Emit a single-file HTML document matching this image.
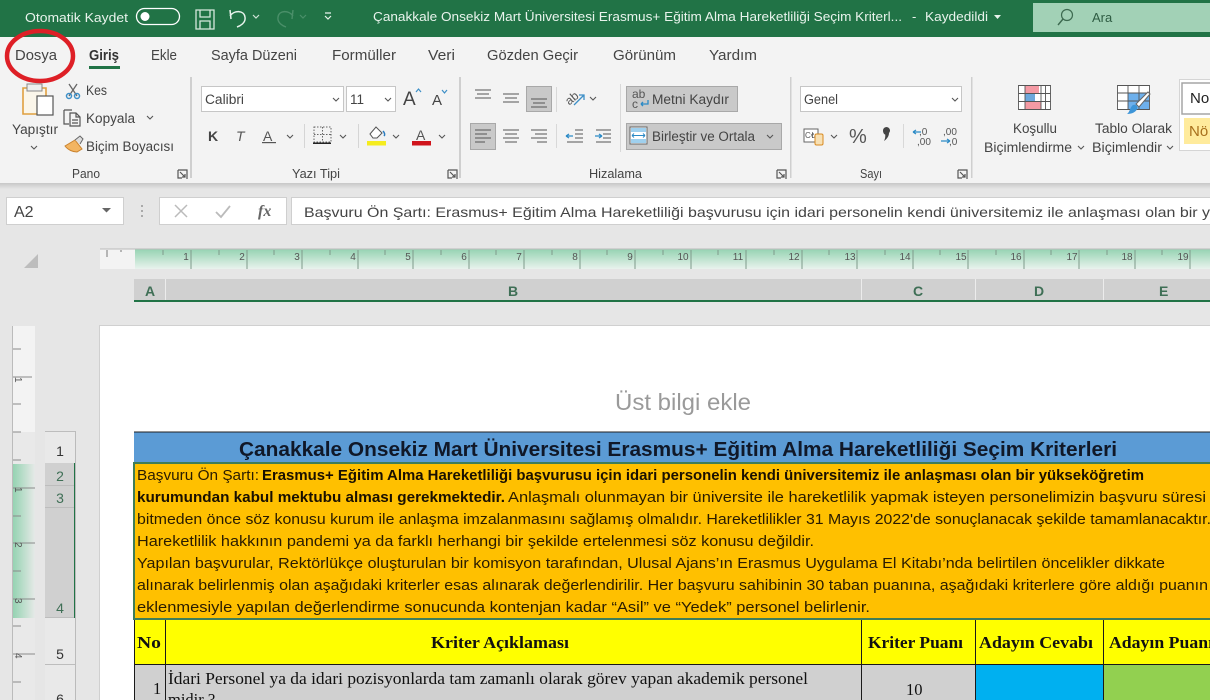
<!DOCTYPE html>
<html lang="tr"><head><meta charset="utf-8"><title>Excel</title>
<style>
html,body{margin:0;padding:0;width:1210px;height:700px;overflow:hidden;background:#e6e6e6}
svg{display:block;filter:blur(.3px)}
text{font-family:"Liberation Sans",sans-serif;white-space:pre}
.t{font-size:13.5px;fill:#444}
.w{font-size:13px;fill:#e8f3ec}
.s{font-family:"Liberation Serif",serif;font-weight:bold;font-size:16.5px;fill:#111}
.f{font-family:"Liberation Serif",serif;font-size:16.5px;fill:#111}
.o{font-size:14.5px;fill:#2a1c00}
.b{font-weight:bold;fill:#1a1000}
.ic{fill:none;stroke:#555;stroke-width:1.2}
.ch{fill:none;stroke:#555;stroke-width:1.1}
.r{font-size:10px;fill:#555}
.h{font-size:14px;font-weight:bold;fill:#3f6f56}
</style></head><body>
<svg width="1210" height="700" viewBox="0 0 1210 700" xmlns="http://www.w3.org/2000/svg">
<defs>
<linearGradient id="gt" x1="0" y1="0" x2="0" y2="1"><stop offset="0" stop-color="#95d3b2"/><stop offset="1" stop-color="#e9f3ed"/></linearGradient>
<linearGradient id="gl" x1="0" y1="0" x2="1" y2="0"><stop offset="0" stop-color="#95d3b2"/><stop offset="1" stop-color="#e6e9e7"/></linearGradient>
<linearGradient id="sh" x1="0" y1="0" x2="0" y2="1"><stop offset="0" stop-color="#c8c8c8"/><stop offset="1" stop-color="#e6e6e6"/></linearGradient>
</defs>
<rect width="1210" height="700" fill="#e6e6e6"/>
<!-- title bar -->
<rect width="1210" height="37" fill="#217346"/>
<text x="25" y="22" class="w" textLength="103" lengthAdjust="spacingAndGlyphs">Otomatik Kaydet</text>
<rect x="136.500" y="8.500" width="43" height="16" rx="8" fill="none" stroke="#fff" stroke-width="1.300"/>
<circle cx="145" cy="16.500" r="4.500" fill="#fff"/>
<path d="M196 10h18v19h-18zM200 10v7h10v-7M200 29v-8h10v8" fill="none" stroke="#d5e8dc" stroke-width="1.300"/>
<path d="M231 19l-1-9M230 16c4-6 14-6 15 1 1 6-5 9-8 10" fill="none" stroke="#e8f3ec" stroke-width="1.500"/>
<path d="M253 15l3 3 3-3" fill="none" stroke="#cfe3d7" stroke-width="1.200"/>
<path d="M292 19l1-9M293 16c-4-6-14-6-15 1-1 6 5 9 8 10" fill="none" stroke="#4a8f69" stroke-width="1.400"/>
<path d="M300 15l3 3 3-3" fill="none" stroke="#4a8f69" stroke-width="1.200"/>
<path d="M325 13h6M325 16l3 3 3-3" fill="none" stroke="#e8f3ec" stroke-width="1.200"/>
<text x="373" y="21" class="w" textLength="529" lengthAdjust="spacingAndGlyphs">Çanakkale Onsekiz Mart Üniversitesi Erasmus+ Eğitim Alma Hareketliliği Seçim Kriterl...</text>
<text x="912" y="21" class="w">-</text>
<text x="925" y="21" class="w" textLength="63" lengthAdjust="spacingAndGlyphs">Kaydedildi</text>
<path d="M994 15h7l-3.500 4z" fill="#e8f3ec"/>
<rect x="1033" y="3" width="177" height="29" fill="#a2d1b6"/>
<circle cx="1067" cy="15" r="5.500" fill="none" stroke="#3d6a50" stroke-width="1.200"/>
<path d="M1063 19l-5 6" stroke="#3d6a50" stroke-width="1.400"/>
<text x="1092" y="22" font-size="13" fill="#2f5c43">Ara</text>
<!-- ribbon -->
<rect y="37" width="1210" height="146" fill="#f3f3f3"/>
<rect y="183" width="1210" height="6" fill="url(#sh)"/>
<g class="t" style="font-size:14.500px">
<text x="15" y="60" textLength="42" lengthAdjust="spacingAndGlyphs">Dosya</text>
<text x="89" y="60" textLength="30" lengthAdjust="spacingAndGlyphs" font-weight="bold" fill="#333">Giriş</text>
<text x="151" y="60" textLength="26" lengthAdjust="spacingAndGlyphs">Ekle</text>
<text x="211" y="60" textLength="86" lengthAdjust="spacingAndGlyphs">Sayfa Düzeni</text>
<text x="332" y="60" textLength="64" lengthAdjust="spacingAndGlyphs">Formüller</text>
<text x="428" y="60" textLength="27" lengthAdjust="spacingAndGlyphs">Veri</text>
<text x="487" y="60" textLength="91" lengthAdjust="spacingAndGlyphs">Gözden Geçir</text>
<text x="613" y="60" textLength="63" lengthAdjust="spacingAndGlyphs">Görünüm</text>
<text x="709" y="60" textLength="48" lengthAdjust="spacingAndGlyphs">Yardım</text>
</g>
<rect x="89" y="66" width="31" height="3" fill="#217346"/>
<ellipse cx="40" cy="56" rx="33" ry="25" fill="none" stroke="#de1f26" stroke-width="4.500"/>
<!-- separators -->
<g fill="#cfcfcf"><rect x="190" y="77" width="2" height="101"/><rect x="459" y="77" width="2" height="101"/><rect x="790" y="77" width="1.500" height="101"/><rect x="971" y="77" width="1.500" height="101"/></g>
<!-- Pano -->
<path d="M23 88h23v26H23z" fill="#fbf6ea" stroke="#e0a040" stroke-width="1.600"/>
<rect x="27" y="84" width="15" height="7" fill="#eee" stroke="#888"/>
<rect x="37" y="96" width="16" height="19" fill="#fff" stroke="#555" stroke-width="1.200"/>
<text x="12" y="134" class="t" textLength="46" lengthAdjust="spacingAndGlyphs">Yapıştır</text>
<path class="ch" d="M31 146l3 3 3-3"/>
<path d="M69 84l8 12M77 84l-8 12" stroke="#666" stroke-width="1.300"/>
<circle cx="69" cy="96" r="2.500" fill="none" stroke="#3d8fc7" stroke-width="1.500"/><circle cx="77" cy="96" r="2.500" fill="none" stroke="#3d8fc7" stroke-width="1.500"/>
<text x="86" y="95" class="t" textLength="21" lengthAdjust="spacingAndGlyphs">Kes</text>
<path class="ic" d="M64 110h8M64 110v14h5M70 113h6l4 4v9H70zM76 113v4h4M72 120h6M72 123h6"/>
<text x="86" y="123" class="t" textLength="49" lengthAdjust="spacingAndGlyphs">Kopyala</text>
<path class="ch" d="M147 116l3 3 3-3"/>
<path d="M65 146l10-6 7 9-5 3c-4 0-9-2-12-6z" fill="#f3b562" stroke="#c9822e"/>
<path d="M75 140l5-4 3 3-3 5" fill="#ddd" stroke="#666"/>
<text x="86" y="151" class="t" textLength="88" lengthAdjust="spacingAndGlyphs">Biçim Boyacısı</text>
<text x="72" y="178" font-size="12.500" fill="#444" textLength="28" lengthAdjust="spacingAndGlyphs">Pano</text>
<path class="ic" d="M178 170h9v9M178 170v8h4M180 172l5 5M185 174v3h-3"/>
<!-- Yazi tipi -->
<rect x="201.500" y="86.500" width="142" height="25" fill="#fff" stroke="#c6c6c6"/>
<text x="205" y="104" class="t" textLength="39" lengthAdjust="spacingAndGlyphs">Calibri</text>
<path class="ch" d="M333 98l3 3 3-3"/>
<rect x="346.500" y="86.500" width="49" height="25" fill="#fff" stroke="#c6c6c6"/>
<text x="350" y="104" class="t">11</text>
<path class="ch" d="M385 98l3 3 3-3"/>
<text x="403" y="105" font-size="19" fill="#444">A</text><path d="M416 92l2.500-3 2.500 3" fill="none" stroke="#3d8fc7" stroke-width="1.200"/>
<text x="432" y="105" font-size="15" fill="#444">A</text><path d="M442 90l2.500 3 2.500-3" fill="none" stroke="#3d8fc7" stroke-width="1.200"/>
<text x="208" y="141" font-size="14" font-weight="bold" fill="#444">K</text>
<text x="236" y="141" font-size="14" font-style="italic" fill="#555">T</text>
<text x="263" y="141" font-size="14" fill="#555">A</text><rect x="262" y="142" width="14" height="1.200" fill="#555"/>
<path class="ch" d="M287 135l3 3 3-3"/>
<rect x="304" y="124" width="1" height="24" fill="#d5d5d5"/>
<path d="M314 127h17v15h-17zM322.500 127v15M314 134.500h17" fill="none" stroke="#666" stroke-dasharray="1.500 1.500"/>
<rect x="313" y="142.500" width="18" height="1.500" fill="#222"/>
<path class="ch" d="M340 135l3 3 3-3"/>
<rect x="358" y="124" width="1" height="24" fill="#d5d5d5"/>
<path d="M370 134l6-7 6 6-5 5h-4z" fill="#fff" stroke="#555"/><path d="M383 131c2 2 2 4 1 5" fill="none" stroke="#2b7cc0" stroke-width="1.500"/>
<rect x="367" y="141" width="19" height="4.500" fill="#f5ec1e"/>
<path class="ch" d="M393 135l3 3 3-3"/>
<text x="416" y="140" font-size="14" fill="#555">A</text>
<rect x="412" y="141" width="19" height="4.500" fill="#d0141c"/>
<path class="ch" d="M439 135l3 3 3-3"/>
<text x="292" y="178" font-size="12.500" fill="#444" textLength="48" lengthAdjust="spacingAndGlyphs">Yazı Tipi</text>
<path class="ic" d="M448 170h9v9M448 170v8h4M450 172l5 5M455 174v3h-3"/>
<!-- Hizalama -->
<rect x="526.500" y="86.500" width="25" height="25" fill="#c9c9c9" stroke="#a8a8a8"/>
<rect x="470.500" y="123.500" width="25" height="26" fill="#c9c9c9" stroke="#a8a8a8"/>
<g stroke="#555" stroke-width="1.100" fill="none">
<path d="M475 90h16M477 94h12M475 98h16"/>
<path d="M503 94h16M505 98h12M503 102h16"/>
<path d="M531 99h16M533 103h12M531 107h16"/>
<path d="M475 130h16M475 134h12M475 138h16M475 142h10"/>
<path d="M503 130h16M505 134h12M503 138h16M505 142h12"/>
<path d="M531 130h16M535 134h12M531 138h16M537 142h10"/>
<path d="M575 130h8M575 134h8M575 138h8M567 142h16" transform="translate(0,0)"/>
<path d="M596 130h15M603 134h8M603 138h8M596 142h15"/>
</g>
<path d="M566 136h7M566 136l3-2M566 136l3 2" stroke="#2b8ac6" fill="none" stroke-width="1.300"/>
<path d="M595 136h7M602 136l-3-2M602 136l-3 2" stroke="#2b8ac6" fill="none" stroke-width="1.300"/>
<rect x="556" y="87" width="1" height="25" fill="#d8d8d8"/><rect x="556" y="124" width="1" height="24" fill="#d8d8d8"/>
<text x="565" y="102" font-size="12" fill="#555" transform="rotate(-40 572 98)">ab</text>
<path d="M574 105l10-10M579 95h5v5" stroke="#3d8fc7" fill="none" stroke-width="1.300"/>
<path class="ch" d="M590 97l3 3 3-3"/>
<rect x="620" y="84" width="1" height="68" fill="#d8d8d8"/>
<rect x="626.500" y="86.500" width="111" height="25" fill="#c9c9c9" stroke="#a8a8a8"/>
<text x="632" y="98" font-size="12" fill="#555">ab</text><text x="632" y="108" font-size="12" fill="#555">c</text>
<path d="M648 100v4h-7M641 104l2-2M641 104l2 2" stroke="#2b8ac6" fill="none" stroke-width="1.300"/>
<text x="652" y="104" class="t" textLength="77" lengthAdjust="spacingAndGlyphs">Metni Kaydır</text>
<rect x="626.500" y="123.500" width="155" height="26" fill="#c9c9c9" stroke="#a8a8a8"/>
<rect x="630" y="127" width="17" height="17" fill="#fff" stroke="#666"/><rect x="631" y="128" width="15" height="4" fill="#9fd0ee"/><rect x="631" y="139" width="15" height="4" fill="#9fd0ee"/>
<path d="M632 135.500h13M632 135.500l2-2M632 135.500l2 2M645 135.500l-2-2M645 135.500l-2 2" stroke="#2b8ac6" fill="none"/>
<text x="652" y="141" class="t" textLength="103" lengthAdjust="spacingAndGlyphs">Birleştir ve Ortala</text>
<path class="ch" d="M767 135l3 3 3-3"/>
<text x="589" y="178" font-size="12.500" fill="#444" textLength="53" lengthAdjust="spacingAndGlyphs">Hizalama</text>
<path class="ic" d="M777 170h9v9M777 170v8h4M779 172l5 5M784 174v3h-3"/>
<!-- Sayi -->
<rect x="800.500" y="86.500" width="161" height="25" fill="#fff" stroke="#c6c6c6"/>
<text x="804" y="104" class="t" textLength="34" lengthAdjust="spacingAndGlyphs">Genel</text>
<path class="ch" d="M952 98l3 3 3-3"/>
<rect x="804" y="129" width="14" height="13" fill="#fff" stroke="#666"/><text x="805" y="138" font-size="8" fill="#555">C₺</text>
<rect x="815" y="134" width="8" height="11" rx="1.500" fill="#f7e0b4" stroke="#d88a20"/>
<path class="ch" d="M831 135l3 3 3-3"/>
<text x="849" y="143" font-size="20" fill="#555">%</text>
<path d="M883 130.500a3.500 3.500 0 1 1 6 2.500c0 3-2 6-5 8 1-2 1.500-4 1.200-6.500-1.200 0-2.200-2-2.200-4z" fill="#444"/>
<rect x="903" y="124" width="1" height="24" fill="#d8d8d8"/>
<text x="919" y="135" font-size="10" fill="#555">,0</text><text x="917" y="145" font-size="10" fill="#555">,00</text>
<path d="M913 132h8M913 132l3-2M913 132l3 2" stroke="#2b8ac6" fill="none" stroke-width="1.200"/>
<text x="943" y="135" font-size="10" fill="#555">,00</text><text x="949" y="145" font-size="10" fill="#555">,0</text>
<path d="M941 141h9M950 141l-3-2M950 141l-3 2" stroke="#2b8ac6" fill="none" stroke-width="1.200"/>
<text x="860" y="178" font-size="12.500" fill="#444" textLength="22" lengthAdjust="spacingAndGlyphs">Sayı</text>
<path class="ic" d="M958 170h9v9M958 170v8h4M960 172l5 5M965 174v3h-3"/>
<!-- Stiller -->
<rect x="1018" y="85" width="33" height="25" fill="#fff"/>
<rect x="1025" y="85" width="14" height="8.500" fill="#f49aa4"/>
<rect x="1025" y="93.500" width="10" height="8" fill="#6ea8dc"/><rect x="1025" y="101.500" width="16" height="8.500" fill="#f49aa4"/>
<path d="M1018.500 85.500h32v24h-32zM1018.500 93.500h32M1018.500 101.500h32M1025 85v25M1041 85v25M1045.500 85v25" fill="none" stroke="#555" stroke-width=".9"/>
<rect x="1117" y="85" width="32" height="25" fill="#fff"/>
<rect x="1128" y="93" width="21" height="17" fill="#6eb0ec"/>
<path d="M1117.500 85.500h32v24h-32zM1117.500 93h32M1117.500 101h32M1128 85v25M1139 85v25" fill="none" stroke="#555" stroke-width=".9"/>
<path d="M1150 94l-11 13-3-3 12-12z" fill="#fff" stroke="#666"/>
<path d="M1133 105c3-1 5 1 4 4-1 3-5 5-10 5 3-2 3-7 6-9z" fill="#3d95d8"/>
<g class="t">
<text x="1013" y="133" textLength="44" lengthAdjust="spacingAndGlyphs">Koşullu</text>
<text x="984" y="152" textLength="88" lengthAdjust="spacingAndGlyphs">Biçimlendirme</text>
<text x="1095" y="133" textLength="77" lengthAdjust="spacingAndGlyphs">Tablo Olarak</text>
<text x="1092" y="152" textLength="70" lengthAdjust="spacingAndGlyphs">Biçimlendir</text>
</g>
<path class="ch" d="M1078 146l3 3 3-3"/><path class="ch" d="M1167 146l3 3 3-3"/>
<rect x="1179.500" y="79.500" width="35" height="71" fill="#fff" stroke="#d5d5d5"/>
<rect x="1182" y="83" width="32" height="31" fill="#fff" stroke="#a5a5a5" stroke-width="1.500"/>
<text x="1190" y="103" font-size="15" fill="#222">No</text>
<rect x="1184" y="118" width="30" height="26" fill="#ffeb9c"/>
<text x="1189" y="136" font-size="15" fill="#a8701c">Nö</text>
<!-- formula bar -->
<rect x="6.500" y="197.500" width="117" height="27" fill="#fff" stroke="#cfcfcf"/>
<text x="14" y="217" font-size="16" fill="#444">A2</text>
<path d="M102 208h9l-4.500 4.500z" fill="#666"/>
<g fill="#aaa"><rect x="141" y="205" width="2" height="2"/><rect x="141" y="210" width="2" height="2"/><rect x="141" y="215" width="2" height="2"/></g>
<rect x="159.500" y="197.500" width="127" height="27" fill="#fff" stroke="#cfcfcf"/>
<path d="M175 205l12 12M187 205l-12 12" stroke="#bbb" stroke-width="1.500"/>
<path d="M216 212l5 5 9-11" fill="none" stroke="#bbb" stroke-width="1.800"/>
<text x="258" y="216" style="font-family:'Liberation Serif',serif;font-style:italic;font-weight:bold;font-size:16px" fill="#666">fx</text>
<rect x="291.500" y="197.500" width="925" height="27" fill="#fff" stroke="#cfcfcf"/>
<text x="304" y="217" font-size="14" fill="#444" textLength="906" lengthAdjust="spacingAndGlyphs">Başvuru Ön Şartı: Erasmus+ Eğitim Alma Hareketliliği başvurusu için idari personelin kendi üniversitemiz ile anlaşması olan bir y</text>
<!-- select all triangle -->
<path d="M38 254v14H24z" fill="#bdbdbd"/>
<!-- top ruler -->
<rect x="100" y="249" width="35" height="20" fill="#f3f3f3"/>
<rect x="135" y="249" width="1075" height="20" fill="url(#gt)"/>
<rect x="100" y="248.500" width="1110" height="1" fill="#bbb"/>
<path d="M107 250v7M121 250v2" stroke="#777"/>
<g stroke="#7f9a8b" fill="none"><path d="M163 250v5M191 250v19M219 250v5M247 250v19M274 250v5M302 250v19M330 250v5M358 250v19M385 250v5M413 250v19M441 250v5M469 250v19M496 250v5M524 250v19M552 250v5M580 250v19M607 250v5M635 250v19M663 250v5M691 250v19M718 250v5M746 250v19M774 250v5M802 250v19M829 250v5M857 250v19M885 250v5M913 250v19M940 250v5M968 250v19M996 250v5M1024 250v19M1051 250v5M1079 250v19M1107 250v5M1135 250v19M1162 250v5M1190 250v19"/></g>
<g class="r" text-anchor="middle">
<text x="186" y="260">1</text><text x="242" y="260">2</text><text x="297" y="260">3</text><text x="353" y="260">4</text><text x="408" y="260">5</text><text x="464" y="260">6</text><text x="519" y="260">7</text><text x="575" y="260">8</text><text x="630" y="260">9</text><text x="683" y="260">10</text><text x="738" y="260">11</text><text x="794" y="260">12</text><text x="850" y="260">13</text><text x="905" y="260">14</text><text x="961" y="260">15</text><text x="1016" y="260">16</text><text x="1072" y="260">17</text><text x="1127" y="260">18</text><text x="1183" y="260">19</text>
</g>
<!-- column headers -->
<rect x="134" y="279" width="1076" height="21" fill="#d0d0d0"/>
<rect x="134" y="300" width="1076" height="2" fill="#217346"/>
<g fill="#ececec"><rect x="165" y="279" width="1" height="21"/><rect x="861" y="279" width="1" height="21"/><rect x="975" y="279" width="1" height="21"/><rect x="1103" y="279" width="1" height="21"/></g>
<text x="145" y="296" class="h">A</text><text x="508" y="296" class="h">B</text><text x="913" y="296" class="h">C</text><text x="1034" y="296" class="h">D</text><text x="1159" y="296" class="h">E</text>
<!-- left ruler -->
<rect x="13" y="326" width="22" height="106" fill="#f3f3f3"/>
<rect x="13" y="432" width="22" height="268" fill="#e9e9e9"/>
<rect x="13" y="464" width="22" height="154" fill="url(#gl)"/>
<rect x="12" y="326" width="1" height="374" fill="#bbb"/>
<g stroke="#8a8a8a"><path d="M13 349h8M13 377h19M13 404h8M13 432h8M13 460h8M13 488h22M13 516h8M13 543h22M13 571h8M13 599h22M13 626h8M13 654h22M13 682h8"/></g>
<g class="r"><text x="14" y="384" transform="rotate(90 18 381)">1</text><text x="14" y="494" transform="rotate(90 18 491)">1</text><text x="14" y="549" transform="rotate(90 18 546)">2</text><text x="14" y="605" transform="rotate(90 18 602)">3</text><text x="14" y="660" transform="rotate(90 18 657)">4</text></g>
<!-- row headers -->
<rect x="45" y="431" width="30" height="269" fill="#e9e9e9"/>
<rect x="45" y="463" width="29" height="155" fill="#d0d0d0"/>
<rect x="74" y="463" width="2" height="155" fill="#217346"/>
<rect x="75" y="431" width="1" height="269" fill="#bbb"/>
<g fill="#bdbdbd"><rect x="45" y="431" width="30" height="1"/><rect x="45" y="485" width="29" height="1"/><rect x="45" y="507" width="29" height="1"/><rect x="45" y="617" width="29" height="1"/><rect x="45" y="664" width="30" height="1"/></g>
<g font-size="14" text-anchor="middle">
<text x="60" y="456" fill="#333">1</text><text x="60" y="481" class="h" style="font-weight:normal">2</text><text x="60" y="503" class="h" style="font-weight:normal">3</text><text x="60" y="613" class="h" style="font-weight:normal">4</text><text x="60" y="659" fill="#333">5</text><text x="60" y="704" fill="#333">6</text>
</g>
<!-- page -->
<rect x="99.500" y="325.500" width="1120" height="380" fill="#fff" stroke="#d0d0d0"/>
<text x="615" y="410" font-size="23" fill="#9a9a9a" textLength="136" lengthAdjust="spacingAndGlyphs">Üst bilgi ekle</text>
<!-- sheet table -->
<rect x="134" y="432" width="1076" height="31" fill="#5b9bd5"/>
<rect x="134" y="431.500" width="1076" height="1" fill="#222"/>
<text x="239" y="456" font-size="20" font-weight="bold" fill="#101828" textLength="878" lengthAdjust="spacingAndGlyphs">Çanakkale Onsekiz Mart Üniversitesi Erasmus+ Eğitim Alma Hareketliliği Seçim Kriterleri</text>
<rect x="134" y="463" width="1080" height="156" fill="#ffc000" stroke="#3f7d58" stroke-width="2"/>
<g class="o">
<text x="137" y="480" textLength="122" lengthAdjust="spacingAndGlyphs">Başvuru Ön Şartı:</text>
<text x="262" y="480" class="b" textLength="882" lengthAdjust="spacingAndGlyphs">Erasmus+ Eğitim Alma Hareketliliği başvurusu için idari personelin kendi üniversitemiz ile anlaşması olan bir yükseköğretim</text>
<text x="137" y="502" class="b" textLength="368" lengthAdjust="spacingAndGlyphs">kurumundan kabul mektubu alması gerekmektedir.</text>
<text x="508" y="502" textLength="698" lengthAdjust="spacingAndGlyphs">Anlaşmalı olunmayan bir üniversite ile hareketlilik yapmak isteyen personelimizin başvuru süresi</text>
<text x="137" y="524" textLength="1074" lengthAdjust="spacingAndGlyphs">bitmeden önce söz konusu kurum ile anlaşma imzalanmasını sağlamış olmalıdır. Hareketlilikler 31 Mayıs 2022'de sonuçlanacak şekilde tamamlanacaktır.</text>
<text x="137" y="546" textLength="677" lengthAdjust="spacingAndGlyphs">Hareketlilik hakkının pandemi ya da farklı herhangi bir şekilde ertelenmesi söz konusu değildir.</text>
<text x="137" y="568" textLength="1028" lengthAdjust="spacingAndGlyphs">Yapılan başvurular, Rektörlükçe oluşturulan bir komisyon tarafından, Ulusal Ajans’ın Erasmus Uygulama El Kitabı’nda belirtilen öncelikler dikkate</text>
<text x="137" y="590" textLength="1071" lengthAdjust="spacingAndGlyphs">alınarak belirlenmiş olan aşağıdaki kriterler esas alınarak değerlendirilir. Her başvuru sahibinin 30 taban puanına, aşağıdaki kriterlere göre aldığı puanın</text>
<text x="137" y="612" textLength="733" lengthAdjust="spacingAndGlyphs">eklenmesiyle yapılan değerlendirme sonucunda kontenjan kadar “Asil” ve “Yedek” personel belirlenir.</text>
</g>
<rect x="134" y="620" width="1076" height="44" fill="#ffff00"/>
<rect x="134" y="665" width="727" height="35" fill="#d0d0d0"/>
<rect x="861" y="665" width="114" height="35" fill="#d0d0d0"/>
<rect x="975" y="665" width="128" height="35" fill="#00b0f0"/>
<rect x="1103" y="665" width="107" height="35" fill="#92d050"/>
<g fill="#1a1a1a"><rect x="134" y="664" width="1076" height="1"/><rect x="134" y="620" width="1" height="80"/><rect x="165" y="620" width="1" height="80"/><rect x="861" y="620" width="1" height="80"/><rect x="975" y="620" width="1" height="80"/><rect x="1103" y="620" width="1" height="80"/></g>
<text x="137" y="648" class="s" textLength="24" lengthAdjust="spacingAndGlyphs">No</text>
<text x="431" y="648" class="s" textLength="138" lengthAdjust="spacingAndGlyphs">Kriter Açıklaması</text>
<text x="868" y="648" class="s" textLength="95" lengthAdjust="spacingAndGlyphs">Kriter Puanı</text>
<text x="979" y="648" class="s" textLength="114" lengthAdjust="spacingAndGlyphs">Adayın Cevabı</text>
<text x="1109" y="648" class="s" textLength="104" lengthAdjust="spacingAndGlyphs">Adayın Puanı</text>
<text x="153" y="694" class="f">1</text>
<text x="168" y="684" class="f" textLength="640" lengthAdjust="spacingAndGlyphs">İdari Personel ya da idari pozisyonlarda tam zamanlı olarak görev yapan akademik personel</text>
<text x="168" y="705" class="f">midir ?</text>
<text x="906" y="695" class="f">10</text>
</svg>
</body></html>
